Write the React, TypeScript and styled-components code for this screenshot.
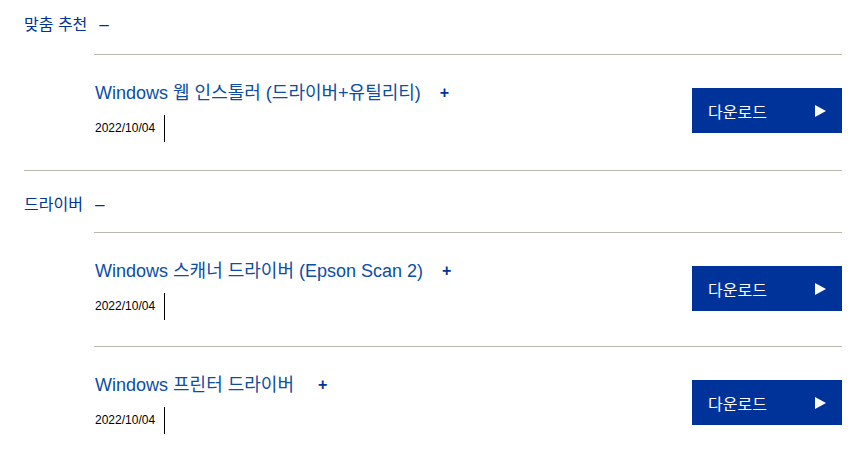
import React from "react";
import styled, { createGlobalStyle } from "styled-components";

const GlobalStyle = createGlobalStyle`
  html, body { margin: 0; padding: 0; background: #ffffff; }
  body {
    font-family: "Liberation Sans", Arial, "Noto Sans CJK KR", sans-serif;
  }
`;

const LINE = "#bab6ae";
const BLUE = "#003399";
const TITLE_BLUE = "#0b4ea2";

const Page = styled.div`
  padding: 0 20px 0 24px;
`;

const Section = styled.section<{ $first?: boolean }>`
  border-top: ${(p) => (p.$first ? "none" : `1px solid ${LINE}`)};
  padding-bottom: 2px;
`;

const SectionHeader = styled.div<{ $first?: boolean }>`
  display: flex;
  align-items: center;
  padding: ${(p) => (p.$first ? "15px 0 19px" : "24px 0 17px")};
  font-size: 16px;
  line-height: 20px;
  color: ${BLUE};
`;

const Toggle = styled.span`
  margin-left: 12px;
  font-size: 17px;
`;

const ItemList = styled.div`
  margin-left: 70px;
`;

const Item = styled.div`
  display: flex;
  justify-content: space-between;
  align-items: flex-start;
  border-top: 1px solid ${LINE};
  padding: 27px 0 26px;
`;

const Info = styled.div`
  display: flex;
  flex-direction: column;
  padding-left: 1px;
`;

const Title = styled.div`
  display: flex;
  align-items: center;
  font-size: 18px;
  line-height: 22px;
  color: ${TITLE_BLUE};
  white-space: pre;
`;

const Plus = styled.span`
  margin-left: 19px;
  font-size: 16px;
  font-weight: bold;
  color: ${BLUE};
`;

const DateRow = styled.div`
  display: flex;
  margin-top: 11px;
`;

const DateText = styled.span`
  font-size: 12px;
  line-height: 27px;
  color: #000;
  padding-right: 9px;
  border-right: 1px solid #000;
`;

const DownloadButton = styled.button`
  width: 150px;
  height: 45px;
  margin-top: 6px;
  padding: 0 16px;
  border: none;
  background: ${BLUE};
  color: #fff;
  display: flex;
  align-items: center;
  justify-content: space-between;
  font-family: "Liberation Sans", Arial, "Noto Sans CJK KR", sans-serif;
  font-size: 16px;
  cursor: pointer;
  flex-shrink: 0;
`;

const Triangle = styled.span`
  width: 0;
  height: 0;
  border-left: 11px solid #fff;
  border-top: 6px solid transparent;
  border-bottom: 6px solid transparent;
`;

type Entry = { title: string; date: string };

const sections: { name: string; items: Entry[] }[] = [
  {
    name: "맞춤 추천",
    items: [{ title: "Windows 웹 인스톨러 (드라이버+유틸리티)", date: "2022/10/04" }],
  },
  {
    name: "드라이버",
    items: [
      { title: "Windows 스캐너 드라이버 (Epson Scan 2)", date: "2022/10/04" },
      { title: "Windows 프린터 드라이버 ", date: "2022/10/04" },
    ],
  },
];

export default function App() {
  return (
    <>
      <GlobalStyle />
      <Page>
        {sections.map((s, i) => (
          <Section key={s.name} $first={i === 0}>
            <SectionHeader $first={i === 0}>
              {s.name}
              <Toggle>–</Toggle>
            </SectionHeader>
            <ItemList>
              {s.items.map((it) => (
                <Item key={it.title}>
                  <Info>
                    <Title>
                      {it.title}
                      <Plus>+</Plus>
                    </Title>
                    <DateRow>
                      <DateText>{it.date}</DateText>
                    </DateRow>
                  </Info>
                  <DownloadButton>
                    다운로드
                    <Triangle />
                  </DownloadButton>
                </Item>
              ))}
            </ItemList>
          </Section>
        ))}
      </Page>
    </>
  );
}
